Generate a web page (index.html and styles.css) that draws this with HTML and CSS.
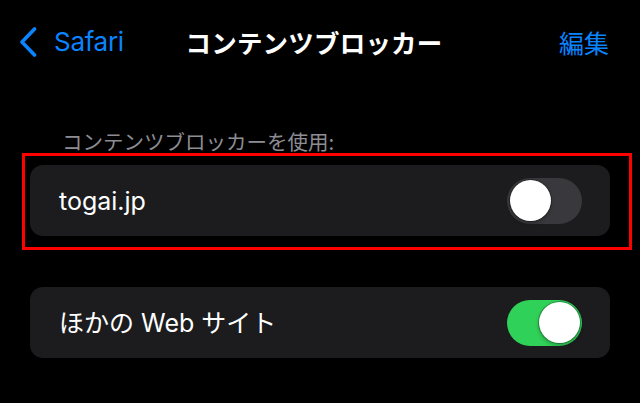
FILE: index.html
```html
<!DOCTYPE html>
<html lang="ja">
<head>
<meta charset="utf-8">
<title>コンテンツブロッカー</title>
<link rel="stylesheet" href="styles.css">
</head>
<body>
<div class="screen">
  <header class="nav">
    <a class="back" href="#">
      <svg class="chevron" viewBox="0 0 18 30" width="18" height="30" aria-hidden="true">
        <path d="M15.5 2 L3 15 L15.5 28" fill="none" stroke="currentColor" stroke-width="3.6" stroke-linecap="round" stroke-linejoin="round"/>
      </svg>
      <span class="back-label">Safari</span>
    </a>
    <h1 class="title">コンテンツブロッカー</h1>
    <a class="edit" href="#">編集</a>
  </header>

  <main class="content">
    <section class="group">
      <h2 class="group-title">コンテンツブロッカーを使用:</h2>
      <div class="card">
        <div class="row">
          <span class="row-label">togai.jp</span>
          <span class="switch"><span class="knob"></span></span>
        </div>
      </div>
    </section>

    <section class="group group-plain">
      <div class="card">
        <div class="row">
          <span class="row-label">ほかの Web サイト</span>
          <span class="switch on"><span class="knob"></span></span>
        </div>
      </div>
    </section>
  </main>

  <div class="highlight" aria-hidden="true"></div>
</div>
</body>
</html>
```

FILE: styles.css
```css
* {
  box-sizing: border-box;
}

html, body {
  margin: 0;
  padding: 0;
  background: #000;
}

body {
  font-family: "Inter", "Noto Sans CJK JP", sans-serif;
  color: #fff;
}

.screen {
  position: relative;
  width: 640px;
  height: 403px;
  overflow: hidden;
  background: #000;
}

/* Navigation bar */
.nav {
  display: grid;
  grid-template-columns: 1fr auto 1fr;
  align-items: center;
  height: 84px;
  padding: 0 31px 0 19px;
}

.back {
  display: flex;
  align-items: center;
  gap: 17px;
  color: #0a84ff;
  text-decoration: none;
  justify-self: start;
}

.chevron {
  display: block;
}

.back-label {
  font-size: 26px;
  line-height: 32px;
  letter-spacing: -0.3px;
}

.title {
  margin: 0;
  font-family: "Noto Sans CJK JP", sans-serif;
  font-size: 25.5px;
  font-weight: 700;
  line-height: 32px;
  letter-spacing: 0.2px;
  color: #fff;
}

.edit {
  justify-self: end;
  font-family: "Noto Sans CJK JP", sans-serif;
  font-size: 25px;
  line-height: 32px;
  color: #0a84ff;
  text-decoration: none;
}

/* Content */
.content {
  padding: 0 30px;
}

.group {
  margin-top: 45px;
}

.group-plain {
  margin-top: 51px;
}

.group-title {
  margin: 0 0 12px 32px;
  font-family: "Noto Sans CJK JP", sans-serif;
  font-size: 20.5px;
  font-weight: 400;
  line-height: 24px;
  color: #8d8d93;
}

.card {
  background: #1c1c1e;
  border-radius: 13px;
}

.row {
  display: flex;
  align-items: center;
  justify-content: space-between;
  height: 71px;
  padding: 0 28px 0 29px;
}

.row-label {
  font-size: 25px;
  line-height: 30px;
  color: #fff;
}

/* Switch */
.switch {
  position: relative;
  display: block;
  width: 75px;
  height: 46px;
  border-radius: 23px;
  background: #39393d;
}

.switch.on {
  background: #30d158;
}

.knob {
  position: absolute;
  top: 2.5px;
  left: 2.5px;
  width: 41px;
  height: 41px;
  border-radius: 50%;
  background: #fff;
  box-shadow: 0 0 0 1px rgba(0, 0, 0, 0.25), 0 2px 4px rgba(0, 0, 0, 0.3);
}

.switch.on .knob {
  left: auto;
  right: 2.5px;
}

/* Annotation frame drawn over the first group */
.highlight {
  position: absolute;
  left: 22px;
  top: 153px;
  width: 610px;
  height: 97px;
  border: 3px solid #ff0000;
  pointer-events: none;
}
```
